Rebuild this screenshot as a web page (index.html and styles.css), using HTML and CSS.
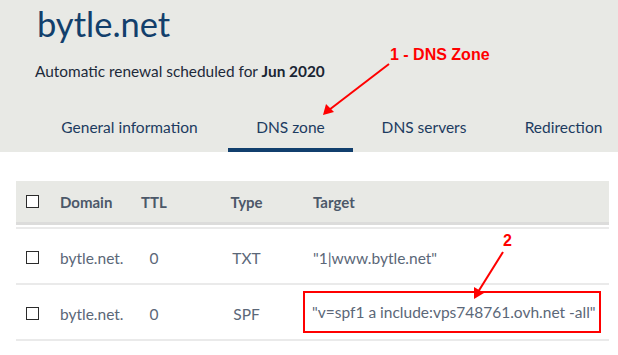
FILE: index.html
```html
<!DOCTYPE html>
<html lang="en">
<head>
<meta charset="utf-8">
<title>bytle.net - DNS zone</title>
<link rel="stylesheet" href="styles.css">
</head>
<body>
<header class="hero">
  <h1 class="title">bytle.net</h1>
  <p class="renewal">Automatic renewal scheduled for <strong>Jun 2020</strong></p>
  <nav class="tabs">
    <a class="tab tab-general">General information</a>
    <a class="tab tab-zone active">DNS zone</a>
    <a class="tab tab-servers">DNS servers</a>
    <a class="tab tab-redirect">Redirection</a>
  </nav>
</header>
<main class="zone">
  <div class="records">
    <div class="row head">
      <div class="cell check"><span class="box"></span></div>
      <div class="cell domain">Domain</div>
      <div class="cell ttl">TTL</div>
      <div class="cell type">Type</div>
      <div class="cell target">Target</div>
    </div>
    <div class="row">
      <div class="cell check"><span class="box"></span></div>
      <div class="cell domain">bytle.net.</div>
      <div class="cell ttl">0</div>
      <div class="cell type">TXT</div>
      <div class="cell target">"1|www.bytle.net"</div>
    </div>
    <div class="row">
      <div class="cell check"><span class="box"></span></div>
      <div class="cell domain">bytle.net.</div>
      <div class="cell ttl">0</div>
      <div class="cell type">SPF</div>
      <div class="cell target"><span class="highlight">"v=spf1 a include:vps748761.ovh.net -all"</span></div>
    </div>
  </div>
</main>
<svg class="arrows" width="618" height="355" viewBox="0 0 618 355" aria-hidden="true">
  <line x1="389" y1="64" x2="329" y2="110" stroke="#ff0000" stroke-width="2"/>
  <polygon points="323,115 326,104 334,112" fill="#ff0000"/>
  <line x1="503" y1="252" x2="478" y2="292" stroke="#ff0000" stroke-width="2"/>
  <polygon points="474,299 474,287 484,293" fill="#ff0000"/>
</svg>
<span class="note note-one">1 - DNS Zone</span>
<span class="note note-two">2</span>
</body>
</html>
```

FILE: styles.css
```css
* { box-sizing: border-box; }

html, body {
  margin: 0;
  padding: 0;
  background: #ffffff;
  width: 618px;
  height: 355px;
  overflow: hidden;
}

body {
  font-family: "Lato", "Open Sans", sans-serif;
  position: relative;
}

.hero {
  background: #e8e9e5;
  padding: 0 0 0 32px;
  height: 152px;
  display: flex;
  flex-direction: column;
}

.title {
  margin: 2px 0 0 5px;
  font-size: 34.5px;
  line-height: 44px;
  font-weight: 400;
  color: #123f6c;
}

.renewal {
  margin: 15px 0 0 3px;
  font-size: 15.4px;
  line-height: 20px;
  color: #1d2a3a;
}

.renewal strong {
  font-weight: 700;
  color: #1a2533;
}

.tabs {
  margin-top: auto;
  display: flex;
  gap: 1px;
}

.tab {
  display: block;
  flex: 0 0 auto;
  height: 40px;
  line-height: 30px;
  text-align: center;
  font-size: 15.5px;
  color: #1c3b60;
  border-bottom: 4px solid transparent;
  white-space: nowrap;
}

.tab-general { width: 195px; }
.tab-zone { width: 125px; }
.tab-servers { width: 140px; }
.tab-redirect { width: 137px; }

.tab.active { border-bottom-color: #113f6d; }

.zone {
  padding: 29px 9px 0 16px;
}

.records {
  width: 593px;
}

.row {
  display: grid;
  grid-template-columns: 34px 80px 48px 125px 1fr;
  align-items: center;
  height: 56px;
  padding-top: 3px;
  border-bottom: 2px solid #eaeaea;
  font-size: 15.5px;
  color: #5b6778;
}

.row.head {
  height: 44px;
  padding-top: 0;
  background: #e8e9e5;
  border-bottom: 3px solid #dcdcdb;
  font-size: 15px;
  font-weight: 700;
  color: #4c5869;
  margin-bottom: 4px;
  position: relative;
}

.row.head::after {
  content: "";
  position: absolute;
  left: 0;
  right: 0;
  bottom: -7px;
  height: 2px;
  background: #eaeaea;
}

.cell { white-space: nowrap; }

.check { padding-left: 10px; display: flex; align-items: center; }

.box {
  display: block;
  width: 13px;
  height: 13px;
  border: 1.5px solid #2b2b2b;
  background: #ffffff;
}

.domain { padding-left: 10px; }
.ttl { text-align: center; }
.type { text-align: center; padding-left: 12px; }
.target { padding-left: 10px; }

.highlight {
  display: inline-block;
  margin-left: -10px;
  margin-top: -4px;
  border: 2px solid #ff0000;
  padding: 10px 3px 10px 7px;
  line-height: 18px;
}

.arrows {
  position: absolute;
  left: 0;
  top: 0;
  pointer-events: none;
}

.note {
  position: absolute;
  font-family: "Liberation Sans", Arial, sans-serif;
  font-weight: 700;
  font-size: 16px;
  line-height: 18px;
  color: #ff0000;
}

.note-one { left: 390px; top: 46px; }
.note-two { left: 503px; top: 232px; }
```
